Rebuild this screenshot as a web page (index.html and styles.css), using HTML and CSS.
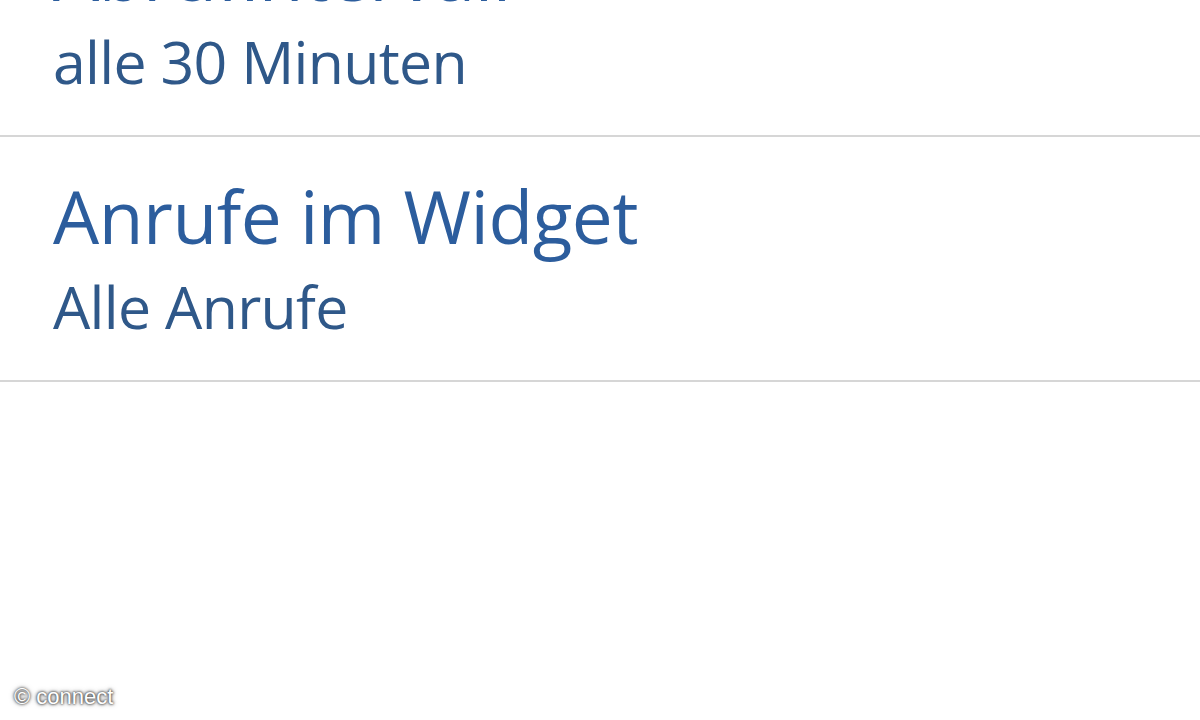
FILE: index.html
```html
<!DOCTYPE html>
<html lang="de">
<head>
<meta charset="utf-8">
<title>Einstellungen</title>
<link rel="stylesheet" href="styles.css">
</head>
<body>
<div class="screen">
  <ul class="prefs">
    <li class="pref pref-scrolled">
      <div class="pref-title">Abrufintervall</div>
      <div class="pref-summary">alle 30 Minuten</div>
    </li>
    <li class="pref">
      <div class="pref-title">Anrufe im Widget</div>
      <div class="pref-summary">Alle Anrufe</div>
    </li>
  </ul>
  <div class="watermark">© connect</div>
</div>
</body>
</html>
```
FILE: styles.css
```css
html, body {
  margin: 0;
  padding: 0;
  background: #ffffff;
}

.screen {
  position: relative;
  width: 1200px;
  height: 720px;
  overflow: hidden;
  background: #ffffff;
  font-family: "Open Sans", "Noto Sans", sans-serif;
}

.prefs {
  list-style: none;
  margin: -103px 0 0 0;
  padding: 0;
}

.pref {
  padding: 33px 0 30px 53px;
  border-bottom: 2px solid #d6d6d6;
}

.pref-scrolled {
  padding-top: 30px;
}

.pref-scrolled .pref-title {
  margin-bottom: -2px;
}

.pref-title {
  font-size: 73px;
  line-height: 92px;
  letter-spacing: -0.45px;
  color: #2c5d9d;
  white-space: nowrap;
}

.pref-summary {
  font-size: 59px;
  line-height: 88px;
  letter-spacing: -0.7px;
  color: #2f5889;
  white-space: nowrap;
}

.watermark {
  position: absolute;
  left: 14px;
  bottom: 10px;
  font-family: "Liberation Sans", Arial, sans-serif;
  font-size: 22px;
  color: #ffffff;
  text-shadow: 0 0 2px #444, 0 0 3px #555, 0 0 5px #777;
}
```
